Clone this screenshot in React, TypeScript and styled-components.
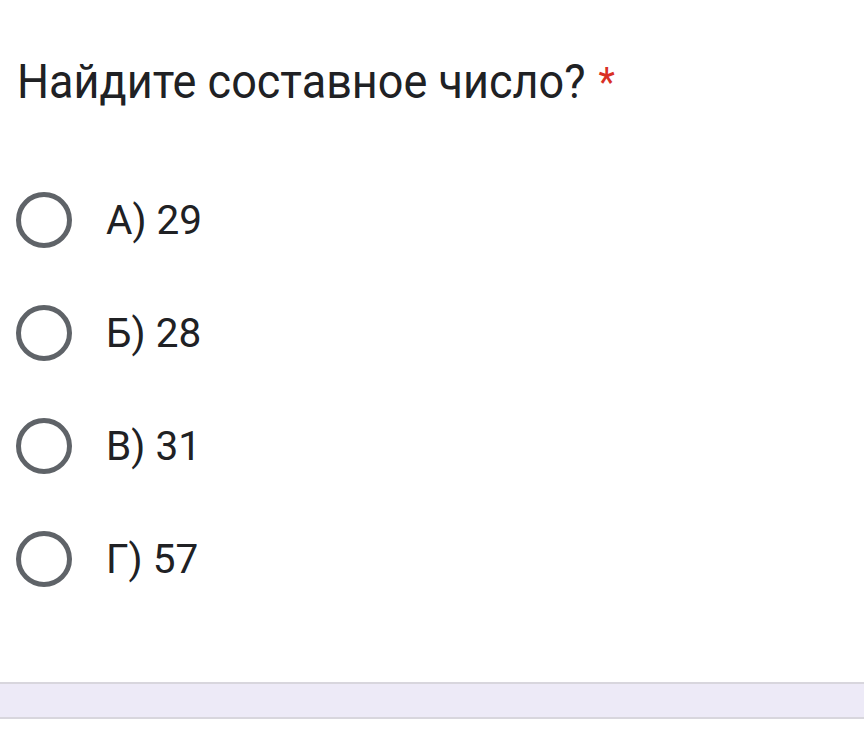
import React from "react";
import styled, { createGlobalStyle } from "styled-components";

const Global = createGlobalStyle`
  html, body { margin: 0; padding: 0; background: #ffffff; }
  body { font-family: Roboto, "Noto Sans", Arial, sans-serif; }
`;

const Page = styled.div`
  width: 864px;
  height: 740px;
  display: flex;
  flex-direction: column;
  background: #fff;
  overflow: hidden;
`;

const Card = styled.div`
  display: flex;
  flex-direction: column;
  padding: 54px 0 0 17px;
  height: 626px;
  box-sizing: border-box;
`;

const Title = styled.div`
  font-size: 45px;
  line-height: 60px;
  color: #202124;
  display: flex;
  align-items: flex-start;
  gap: 13px;
  transform: scaleY(1.07);
  transform-origin: left bottom;
`;

const Star = styled.span`
  color: #d93025;
  font-size: 38px;
  line-height: 60px;
  margin-top: 0px;
`;

const Options = styled.div`
  display: flex;
  flex-direction: column;
  margin-top: 78px;
  gap: 57px;
`;

const Option = styled.label`
  display: flex;
  align-items: center;
  gap: 34px;
  height: 56px;
`;

const Radio = styled.span`
  width: 56px;
  height: 56px;
  box-sizing: border-box;
  border: 5px solid #5f6368;
  border-radius: 50%;
  margin-left: -1px;
  flex: none;
`;

const OptionText = styled.span`
  font-size: 40.5px;
  color: #202124;
`;

const Bar = styled.div`
  height: 33px;
  background: #edeaf7;
  border-top: 2px solid #d8d6dd;
  border-bottom: 2px solid #d8d6dd;
  margin-top: 56px;
`;

const options = ["А) 29", "Б) 28", "В) 31", "Г) 57"];

export default function App() {
  return (
    <>
      <Global />
      <Page>
        <Card>
          <Title>
            <span>Найдите составное число?</span>
            <Star>*</Star>
          </Title>
          <Options>
            {options.map((o) => (
              <Option key={o}>
                <Radio />
                <OptionText>{o}</OptionText>
              </Option>
            ))}
          </Options>
        </Card>
        <Bar />
      </Page>
    </>
  );
}
